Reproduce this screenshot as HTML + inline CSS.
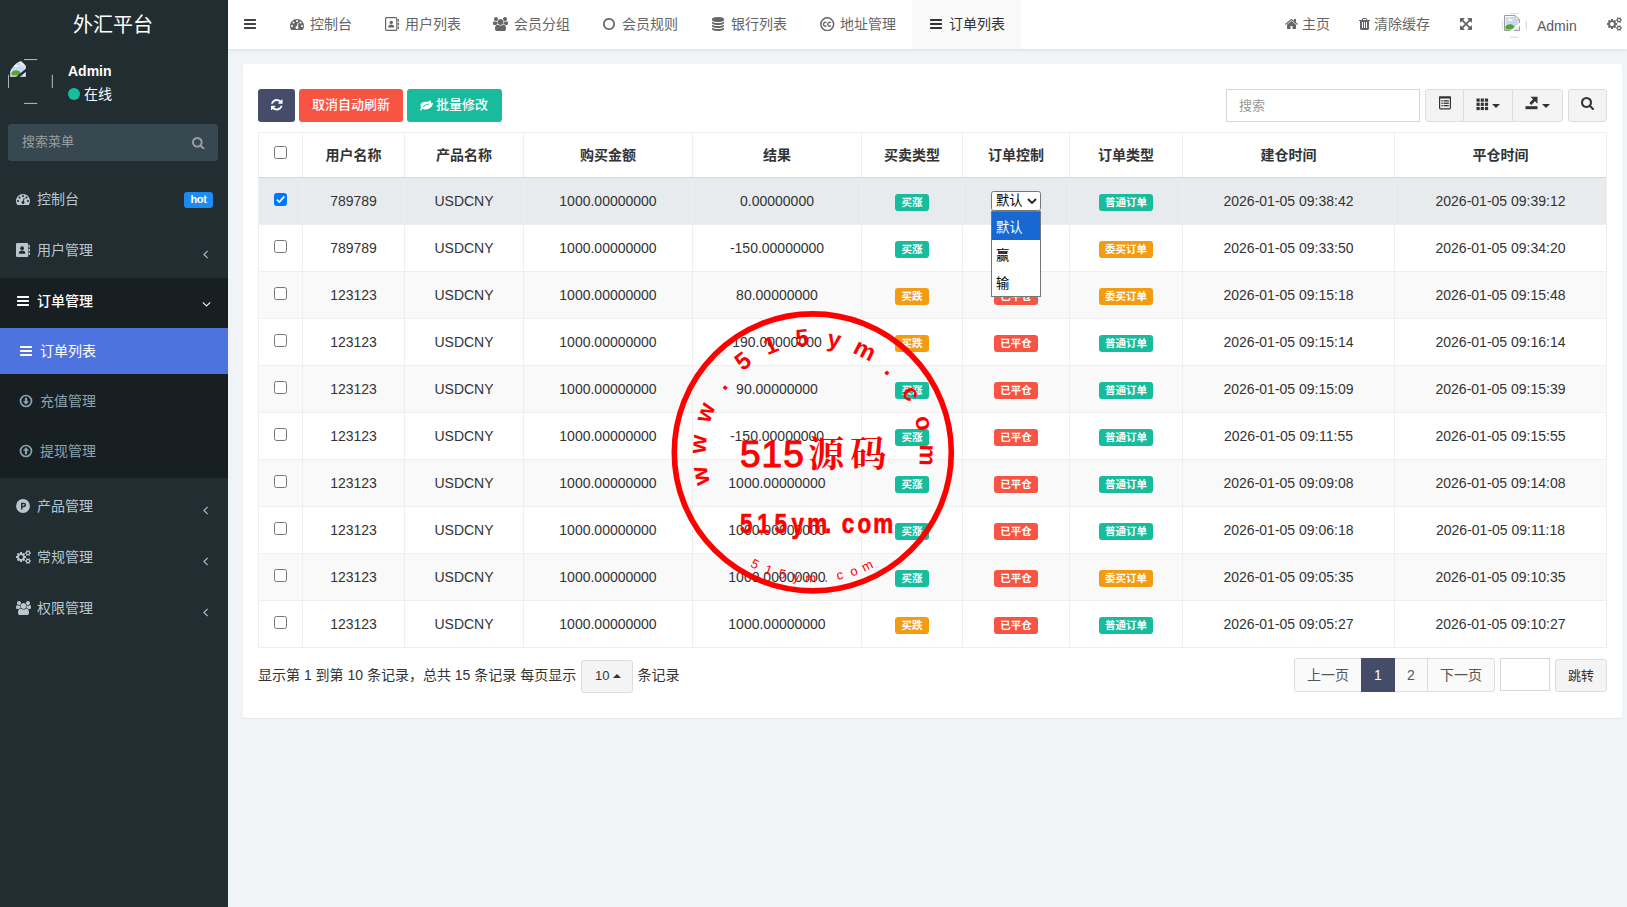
<!DOCTYPE html>
<html lang="zh-CN">
<head>
<meta charset="utf-8">
<title>外汇平台</title>
<style>
*{box-sizing:border-box;margin:0;padding:0}
html,body{width:1627px;height:907px;overflow:hidden}
body{font-family:"Liberation Sans","Noto Sans CJK SC",sans-serif;font-size:14px;color:#333;background:#f1f4f6;position:relative}
svg{display:block}
.abs{position:absolute}
/* sidebar */
#side{position:absolute;left:0;top:0;width:228px;height:907px;background:#222d32;color:#b8c7ce}
#logo{position:absolute;left:0;top:0;width:228px;height:48px;line-height:50px;text-align:center;color:#fff;font-size:20px;padding-right:2px}
#avatar{position:absolute;left:8px;top:59px;width:45px;height:45px}
#uname{position:absolute;left:68px;top:61.5px;color:#fff;font-weight:bold;font-size:14px;line-height:18px}
#ustat{position:absolute;left:68px;top:84.5px;color:#fff;font-size:14px;line-height:18px;white-space:nowrap}
#ustat i{display:inline-block;width:12px;height:12px;border-radius:50%;background:#18bc9c;vertical-align:-1.5px;margin-right:4px}
#msearch{position:absolute;left:8px;top:124px;width:210px;height:37px;background:#374850;border-radius:3px;color:#9a9fa2;font-size:13px;line-height:36.500px;padding-left:14px}
.mi{position:absolute;left:0;width:228px;height:24px;line-height:24px;font-size:14px;color:#b8c7ce;white-space:nowrap}
.mi .ic{position:absolute;left:15px;top:0;height:24px;width:16px;display:flex;align-items:center;justify-content:center}
.mi .tx{position:absolute;left:37px;top:0}
.mi .ar{position:absolute;left:203px;top:9px}
.mi.act{color:#fff;font-weight:500}
.sm{position:absolute;left:0;width:228px;height:24px;line-height:24px;font-size:14px;color:#8aa4af;white-space:nowrap}
.sm .ic{position:absolute;left:19px;top:0;height:24px;width:14px;display:flex;align-items:center;justify-content:center}
.sm .tx{position:absolute;left:40px;top:0}
.sm.on{color:#fff}
.hot{position:absolute;left:184px;top:5px;width:29px;height:16px;border-radius:3px;background:#1b8bf0;color:#fff;font-size:11px;font-weight:bold;line-height:15px;text-align:center;letter-spacing:-.3px}
/* header */
#head{position:absolute;left:228px;top:0;width:1399px;height:49px;background:#fff;box-shadow:0 1px 3px rgba(0,0,0,.1)}
.tab{position:absolute;top:0;height:48px;line-height:48px;font-size:14px;color:#666;white-space:nowrap}
.tab .ti{position:absolute;top:0;height:48px;display:flex;align-items:center}
.tab.cur{color:#333}
/* panel */
#panel{position:absolute;left:243px;top:64px;width:1379px;height:654px;background:#fff;border-radius:3px;box-shadow:0 1px 1px rgba(0,0,0,.05)}
.btn{position:absolute;top:89px;height:33px;border-radius:3px;color:#fff;font-weight:500;font-size:13px;line-height:32px;text-align:center;white-space:nowrap}
.dbtn{position:absolute;background:#f4f4f4;border:1px solid #ddd;color:#333}

#tbl{position:absolute;left:258px;top:132px;width:1349px;border:1px solid #efefef;border-left:0;border-bottom:0;font-size:14px}
.tr{display:flex;height:47px;border-bottom:1px solid #efefef;background:#fff}
.tr.h .td{padding-bottom:2px}
.tr.h{height:45px;border-bottom:1px solid #d3d7da;font-weight:bold;color:#333}
.tr.s{background:#f9f9f9}
.tr.sel{background:#e8ebee}
.td{border-left:1px solid #efefef;height:100%;display:flex;align-items:center;justify-content:center;white-space:nowrap;flex:none;position:relative}
.c0{width:44px}.c1{width:102px}.c2{width:119px}.c3{width:169px}.c4{width:169px}.c5{width:101px}.c6{width:107px}.c7{width:113px}.c8{width:212px}.c9{width:212px}
.cb{position:relative;top:-2px;left:0;width:13px;height:13px;border:1px solid #767676;border-radius:2.5px;background:#fff;display:block}
.cb.on{background:#0075ff;border-color:#0075ff}
.lb{display:inline-block;position:relative;top:1.5px;height:17px;line-height:16px;padding:0 6.2px;border-radius:3px;color:#fff;font-size:10.5px;font-weight:bold;letter-spacing:0}
.g{background:#18bc9c}.o{background:#f39c12}.r{background:#f75444}
.pg{position:absolute;top:658px;height:34px;line-height:32px;border:1px solid #ddd;background:#fafafa;color:#555;font-size:14px;text-align:center;white-space:nowrap}
</style>
</head>
<body>
<div id="side">
<div id="logo">外汇平台</div>
<div id="avatar"><svg viewBox="0 0 45 45" width="45" height="45" style=""><defs><clipPath id="avc"><circle cx="22.400" cy="22.500" r="22.600"/></clipPath></defs><path d="M16.400 .600h12.400M16.400 44.400h12.400M.400 16.200v12.400M44.300 16.200v12.400" fill="none" stroke="#d4dadd" stroke-width="1" stroke-linecap="round" opacity=".85"/><g clip-path="url(#avc)"><g transform="translate(2,2)"><path d="M.5.5h10.500l4.500 4.500v10.500H.5z" fill="#fff" stroke="#b8c0c4" stroke-width="1"/><path d="M11 .5v4.500h4.500z" fill="#fff" stroke="#b8c0c4" stroke-width=".8"/><path d="M1.500 2h9v3.500h4v9h-13z" fill="#c9d9f3"/><path d="M4 5.200a1.600 1.600 0 0 1 3-.6 1.200 1.200 0 0 1 1.600 1.200H3.600z" fill="#fff"/><path d="M1.500 14.500v-3c2-2.500 5.500-3 8-1l3 4z" fill="#55a630"/><path d="M6 16l10-8.500v3.200L9.500 16z" fill="#222d32"/></g></g></svg></div>
<div id="uname">Admin</div>
<div id="ustat"><i></i>在线</div>
<div id="msearch">搜索菜单<svg viewBox="0 0 1664 1792" width="12.54" height="13.50" style="position:absolute;left:184px;top:11.500px"><path d="M1152 832q0-185-131.500-316.500T704 384 387.500 515.500 256 832t131.500 316.500T704 1280t316.500-131.500T1152 832zm512 832q0 52-38 90t-90 38q-54 0-90-38l-343-342q-179 124-399 124-143 0-273.500-55.500t-225-150-150-225T0 832t55.500-273.500 150-225 225-150T704 128t273.500 55.500 225 150 150 225T1408 832q0 220-124 399l343 343q37 37 37 90z" fill="#9a9fa2"/></svg></div>
<div class="abs" style="left:0;top:278px;width:228px;height:200px;background:#181f23"></div>
<div class="abs" style="left:0;top:328px;width:228px;height:46px;background:#4e73df"></div>
<div class="mi" style="top:187px"><span class="ic"><svg viewBox="0 0 1792 1792" width="14.00" height="14.00" style=""><path d="M384 1152q0-53-37.500-90.500T256 1024t-90.500 37.500T128 1152t37.500 90.500T256 1280t90.500-37.500T384 1152zm192-448q0-53-37.500-90.500T448 576t-90.500 37.500T320 704t37.500 90.500T448 832t90.500-37.500T576 704zm428 481l101-382q6-26-7.500-48.500T1059 725t-48 6.500-30 39.500l-101 382q-60 5-107 43.500t-63 98.500q-20 77 20 146t117 89 146-20 89-117q16-60-6-117t-72-91zm660-33q0-53-37.500-90.500T1536 1024t-90.500 37.500-37.500 90.500 37.500 90.500 90.500 37.500 90.500-37.500 37.500-90.500zm-640-640q0-53-37.500-90.500T896 384t-90.500 37.500T768 512t37.500 90.500T896 640t90.500-37.500T1024 512zm448 192q0-53-37.500-90.500T1344 576t-90.500 37.500T1216 704t37.500 90.500T1344 832t90.500-37.500T1472 704zm320 448q0 261-141 483-19 29-54 29H195q-35 0-54-29Q0 1414 0 1152q0-182 71-348t191-286 286-191 348-71 348 71 286 191 191 286 71 348z" fill="currentColor"/></svg></span><span class="tx">控制台</span><span class="hot">hot</span></div>
<div class="mi" style="top:238px"><span class="ic"><svg viewBox="0 0 14 14" width="14" height="14" style=""><rect x="0" y="0" width="12.2" height="14" rx="1.2" fill="currentColor"/><rect x="12.6" y="2" width="1.4" height="2.6" rx=".4" fill="currentColor"/><rect x="12.6" y="5.7" width="1.4" height="2.6" rx=".4" fill="currentColor"/><rect x="12.6" y="9.4" width="1.4" height="2.6" rx=".4" fill="currentColor"/><circle cx="6.1" cy="5.2" r="1.9" fill="#222d32"/><path d="M2.8 10.8c0-2.2 1.3-3.3 3.3-3.3s3.3 1.100 3.300 3.300z" fill="#222d32"/></svg></span><span class="tx">用户管理</span><span class="ar"><svg viewBox="0 0 640 1792" width="5.00" height="14.00" style=""><path d="M627 544q0 13-10 23L224 960l393 393q10 10 10 23t-10 23l-50 50q-10 10-23 10t-23-10L55 983q-10-10-10-23t10-23l466-466q10-10 23-10t23 10l50 50q10 10 10 23z" fill="currentColor"/></svg></span></div>
<div class="mi act" style="top:289px"><span class="ic"><svg viewBox="0 0 1536 1792" width="12.00" height="14.00" style=""><path d="M1536 1344v128q0 26-19 45t-45 19H64q-26 0-45-19t-19-45v-128q0-26 19-45t45-19h1408q26 0 45 19t19 45zm0-512v128q0 26-19 45t-45 19H64q-26 0-45-19T0 960V832q0-26 19-45t45-19h1408q26 0 45 19t19 45zm0-512v128q0 26-19 45t-45 19H64q-26 0-45-19T0 448V320q0-26 19-45t45-19h1408q26 0 45 19t19 45z" fill="currentColor"/></svg></span><span class="tx">订单管理</span><span class="ar" style="left:202px;top:8px"><svg viewBox="0 0 1152 1792" width="9.00" height="14.00" style=""><path d="M1075 736q0 13-10 23l-466 466q-10 10-23 10t-23-10L87 759q-10-10-10-23t10-23l50-50q10-10 23-10t23 10l393 393 393-393q10-10 23-10t23 10l50 50q10 10 10 23z" fill="currentColor"/></svg></span></div>
<div class="sm on" style="top:339px"><span class="ic"><svg viewBox="0 0 1536 1792" width="12.00" height="14.00" style=""><path d="M1536 1344v128q0 26-19 45t-45 19H64q-26 0-45-19t-19-45v-128q0-26 19-45t45-19h1408q26 0 45 19t19 45zm0-512v128q0 26-19 45t-45 19H64q-26 0-45-19T0 960V832q0-26 19-45t45-19h1408q26 0 45 19t19 45zm0-512v128q0 26-19 45t-45 19H64q-26 0-45-19T0 448V320q0-26 19-45t45-19h1408q26 0 45 19t19 45z" fill="currentColor"/></svg></span><span class="tx">订单列表</span></div>
<div class="sm" style="top:389px"><span class="ic"><svg viewBox="0 0 14 14" width="14" height="14" style=""><circle cx="7" cy="7" r="5.500" fill="none" stroke="currentColor" stroke-width="1.700"/><path d="M7 10.700L3.900 7.300H5.900V3.700h2.200v3.600h2z" fill="currentColor"/></svg></span><span class="tx">充值管理</span></div>
<div class="sm" style="top:439px"><span class="ic"><svg viewBox="0 0 14 14" width="14" height="14" style=""><circle cx="7" cy="7" r="5.500" fill="none" stroke="currentColor" stroke-width="1.700"/><path d="M7 3.300L3.900 6.700H5.900V10.300h2.200V6.700h2z" fill="currentColor"/></svg></span><span class="tx">提现管理</span></div>
<div class="mi" style="top:494px"><span class="ic"><svg viewBox="0 0 14 14" width="14" height="14" style=""><circle cx="7" cy="7" r="6.900" fill="currentColor"/><path d="M5 3.800h2.900a2.200 2.200 0 0 1 0 4.400H6.400v2.200H5zM6.400 5.200v1.600h1.500a.8.800 0 0 0 0-1.600z" fill="#222d32"/></svg></span><span class="tx">产品管理</span><span class="ar"><svg viewBox="0 0 640 1792" width="5.00" height="14.00" style=""><path d="M627 544q0 13-10 23L224 960l393 393q10 10 10 23t-10 23l-50 50q-10 10-23 10t-23-10L55 983q-10-10-10-23t10-23l466-466q10-10 23-10t23 10l50 50q10 10 10 23z" fill="currentColor"/></svg></span></div>
<div class="mi" style="top:545px"><span class="ic"><svg viewBox="0 0 1920 1792" width="15.00" height="14.00" style=""><path d="M896 896q0-106-75-181t-181-75-181 75-75 181 75 181 181 75 181-75 75-181zm768 512q0-52-38-90t-90-38-90 38-38 90q0 53 37.500 90.500t90.500 37.500 90.500-37.500 37.500-90.500zm0-1024q0-52-38-90t-90-38-90 38-38 90q0 53 37.500 90.500T1536 512t90.500-37.500T1664 384zm-384 421v185q0 10-7 19.500t-16 10.500l-155 24q-11 35-32 76 34 48 90 115 7 11 7 20 0 12-7 19-23 30-82.500 89.500T999 1424q-11 0-21-7l-115-90q-37 19-77 31-11 108-23 155-7 24-30 24H547q-11 0-20-7.500t-10-17.500l-23-153q-34-10-75-31l-118 89q-7 7-20 7-11 0-21-8-144-133-144-160 0-9 7-19 10-14 41-53t47-61q-23-44-35-82l-152-24q-10-1-17-9.500T0 988V803q0-10 7-19.500T23 773l155-24q11-35 32-76-34-48-90-115-7-11-7-20 0-12 7-20 22-30 82-89t79-59q11 0 21 7l115 90q34-18 77-32 11-108 23-154 7-24 30-24h186q11 0 20 7.500t10 17.500l23 153q34 10 75 31l118-89q8-7 20-7 11 0 21 8 144 133 144 160 0 8-7 19-12 16-42 54t-45 60q23 48 34 82l152 23q10 2 17 10.500t7 19.500zm640 533v140q0 16-149 31-12 27-30 52 51 113 51 138 0 4-4 7-122 71-124 71-8 0-46-47t-52-68q-20 2-30 2t-30-2q-14 21-52 68t-46 47q-2 0-124-71-4-3-4-7 0-25 51-138-18-25-30-52-149-15-149-31v-140q0-16 149-31 13-29 30-52-51-113-51-138 0-4 4-7 4-2 35-20t59-34 30-16q8 0 46 46.500t52 67.500q20-2 30-2t30 2q51-71 92-112l6-2q4 0 124 70 4 3 4 7 0 25-51 138 17 23 30 52 149 15 149 31zm0-1024v140q0 16-149 31-12 27-30 52 51 113 51 138 0 4-4 7-122 71-124 71-8 0-46-47t-52-68q-20 2-30 2t-30-2q-14 21-52 68t-46 47q-2 0-124-71-4-3-4-7 0-25 51-138-18-25-30-52-149-15-149-31V314q0-16 149-31 13-29 30-52-51-113-51-138 0-4 4-7 4-2 35-20t59-34 30-16q8 0 46 46.500t52 67.500q20-2 30-2t30 2q51-71 92-112l6-2q4 0 124 70 4 3 4 7 0 25-51 138 17 23 30 52 149 15 149 31z" fill="currentColor"/></svg></span><span class="tx">常规管理</span><span class="ar"><svg viewBox="0 0 640 1792" width="5.00" height="14.00" style=""><path d="M627 544q0 13-10 23L224 960l393 393q10 10 10 23t-10 23l-50 50q-10 10-23 10t-23-10L55 983q-10-10-10-23t10-23l466-466q10-10 23-10t23 10l50 50q10 10 10 23z" fill="currentColor"/></svg></span></div>
<div class="mi" style="top:596px"><span class="ic"><svg viewBox="0 0 1920 1792" width="15.00" height="14.00" style=""><path d="M593 896q-162 5-265 128H194q-82 0-138-40.500T0 865q0-353 124-353 6 0 43.500 21t97.500 42.500T384 597q67 0 133-23-5 37-5 66 0 139 81 256zm1071 637q0 120-73 189.500t-194 69.500H523q-121 0-194-69.500T256 1533q0-53 3.500-103.500t14-109T300 1212t43-97.500 62-81 85.500-53.500T602 960q10 0 43 21.500t73 48 107 48 135 21.500 135-21.500 107-48 73-48 43-21.500q61 0 111.500 20t85.500 53.500 62 81 43 97.500 26.500 108.500 14 109 3.500 103.500zM640 256q0 106-75 181t-181 75-181-75-75-181 75-181T384 0t181 75 75 181zm704 384q0 159-112.500 271.500T960 1024 688.500 911.500 576 640t112.500-271.500T960 256t271.500 112.500T1344 640zm576 225q0 78-56 118.500t-138 40.500h-134q-103-123-265-128 81-117 81-256 0-29-5-66 66 23 133 23 59 0 119-21.500t97.500-42.500 43.500-21q124 0 124 353zm-128-609q0 106-75 181t-181 75-181-75-75-181 75-181 181-75 181 75 75 181z" fill="currentColor"/></svg></span><span class="tx">权限管理</span><span class="ar"><svg viewBox="0 0 640 1792" width="5.00" height="14.00" style=""><path d="M627 544q0 13-10 23L224 960l393 393q10 10 10 23t-10 23l-50 50q-10 10-23 10t-23-10L55 983q-10-10-10-23t10-23l466-466q10-10 23-10t23 10l50 50q10 10 10 23z" fill="currentColor"/></svg></span></div>
</div>
<div id="head">
<div class="tab" style="left:16px;color:#444"><span class="ti" style="left:0"><svg viewBox="0 0 1536 1792" width="12.00" height="14.00" style=""><path d="M1536 1344v128q0 26-19 45t-45 19H64q-26 0-45-19t-19-45v-128q0-26 19-45t45-19h1408q26 0 45 19t19 45zm0-512v128q0 26-19 45t-45 19H64q-26 0-45-19T0 960V832q0-26 19-45t45-19h1408q26 0 45 19t19 45zm0-512v128q0 26-19 45t-45 19H64q-26 0-45-19T0 448V320q0-26 19-45t45-19h1408q26 0 45 19t19 45z" fill="currentColor"/></svg></span></div>
<div class="abs" style="left:684px;top:0;width:109px;height:49px;background:#f9f9f9"></div>
<div class="tab" style="left:62px"><span class="ti" style="left:0"><svg viewBox="0 0 1792 1792" width="14.00" height="14.00" style=""><path d="M384 1152q0-53-37.500-90.500T256 1024t-90.500 37.500T128 1152t37.500 90.500T256 1280t90.500-37.500T384 1152zm192-448q0-53-37.500-90.500T448 576t-90.500 37.500T320 704t37.500 90.500T448 832t90.500-37.500T576 704zm428 481l101-382q6-26-7.500-48.500T1059 725t-48 6.500-30 39.500l-101 382q-60 5-107 43.500t-63 98.500q-20 77 20 146t117 89 146-20 89-117q16-60-6-117t-72-91zm660-33q0-53-37.500-90.500T1536 1024t-90.500 37.500-37.500 90.500 37.500 90.500 90.500 37.500 90.500-37.500 37.500-90.500zm-640-640q0-53-37.500-90.500T896 384t-90.500 37.500T768 512t37.500 90.500T896 640t90.500-37.500T1024 512zm448 192q0-53-37.500-90.500T1344 576t-90.500 37.500T1216 704t37.500 90.500T1344 832t90.500-37.500T1472 704zm320 448q0 261-141 483-19 29-54 29H195q-35 0-54-29Q0 1414 0 1152q0-182 71-348t191-286 286-191 348-71 348 71 286 191 191 286 71 348z" fill="currentColor"/></svg></span><span class="abs" style="left:20px;top:0">控制台</span></div>
<div class="tab" style="left:157px"><span class="ti" style="left:0"><svg viewBox="0 0 14 14" width="14" height="14" style=""><rect x=".6" y=".6" width="11.2" height="12.8" rx="1" fill="none" stroke="currentColor" stroke-width="1.2"/><rect x="12.6" y="2" width="1.4" height="2.6" rx=".4" fill="currentColor"/><rect x="12.6" y="5.700" width="1.4" height="2.6" rx=".4" fill="currentColor"/><rect x="12.6" y="9.4" width="1.4" height="2.6" rx=".4" fill="currentColor"/><circle cx="6.2" cy="5.4" r="1.7" fill="currentColor"/><path d="M3.2 10.4c0-2 1.2-2.900 3-2.900s3 .9 3 2.900z" fill="currentColor"/></svg></span><span class="abs" style="left:20px;top:0">用户列表</span></div>
<div class="tab" style="left:265px"><span class="ti" style="left:0"><svg viewBox="0 0 1920 1792" width="15.00" height="14.00" style=""><path d="M593 896q-162 5-265 128H194q-82 0-138-40.500T0 865q0-353 124-353 6 0 43.500 21t97.500 42.500T384 597q67 0 133-23-5 37-5 66 0 139 81 256zm1071 637q0 120-73 189.500t-194 69.500H523q-121 0-194-69.500T256 1533q0-53 3.500-103.500t14-109T300 1212t43-97.500 62-81 85.500-53.500T602 960q10 0 43 21.500t73 48 107 48 135 21.500 135-21.500 107-48 73-48 43-21.500q61 0 111.500 20t85.500 53.500 62 81 43 97.500 26.500 108.500 14 109 3.500 103.500zM640 256q0 106-75 181t-181 75-181-75-75-181 75-181T384 0t181 75 75 181zm704 384q0 159-112.500 271.500T960 1024 688.500 911.500 576 640t112.500-271.500T960 256t271.500 112.500T1344 640zm576 225q0 78-56 118.500t-138 40.500h-134q-103-123-265-128 81-117 81-256 0-29-5-66 66 23 133 23 59 0 119-21.500t97.500-42.500 43.500-21q124 0 124 353zm-128-609q0 106-75 181t-181 75-181-75-75-181 75-181 181-75 181 75 75 181z" fill="currentColor"/></svg></span><span class="abs" style="left:21px;top:0">会员分组</span></div>
<div class="tab" style="left:375px"><span class="ti" style="left:0"><svg viewBox="0 0 1536 1792" width="12.00" height="14.00" style=""><path d="M768 352q-148 0-273 73T297 623t-73 273 73 273 198 198 273 73 273-73 198-198 73-273-73-273-198-198-273-73zm768 544q0 209-103 385.500T1153.500 1561 768 1664t-385.500-103T103 1281.500 0 896t103-385.500T382.500 231 768 128t385.500 103T1433 510.500 1536 896z" fill="currentColor"/></svg></span><span class="abs" style="left:19px;top:0">会员规则</span></div>
<div class="tab" style="left:484px"><span class="ti" style="left:0"><svg viewBox="0 0 1536 1792" width="12.00" height="14.00" style=""><path d="M768 768q237 0 443-43t325-127v170q0 69-103 128t-280 93.500-385 34.500-385-34.500T103 896 0 768V598q119 84 325 127t443 43zm0 768q237 0 443-43t325-127v170q0 69-103 128t-280 93.500-385 34.500-385-34.500-280-93.500T0 1536v-170q119 84 325 127t443 43zm0-384q237 0 443-43t325-127v170q0 69-103 128t-280 93.500-385 34.500-385-34.500-280-93.500T0 1152V982q119 84 325 127t443 43zM768 0q208 0 385 34.500t280 93.500 103 128v128q0 69-103 128t-280 93.500T768 640t-385-34.500T103 512 0 384V256q0-69 103-128t280-93.500T768 0z" fill="currentColor"/></svg></span><span class="abs" style="left:19px;top:0">银行列表</span></div>
<div class="tab" style="left:592px"><span class="ti" style="left:0"><svg viewBox="0 0 14.500 14.500" width="14.5" height="14.5" style=""><circle cx="7.250" cy="7.250" r="6.400" fill="none" stroke="currentColor" stroke-width="1.500"/><path d="M6.500 5.800a1.900 1.900 0 1 0 0 2.900" fill="none" stroke="currentColor" stroke-width="1.300"/><path d="M10.900 5.800a1.900 1.900 0 1 0 0 2.900" fill="none" stroke="currentColor" stroke-width="1.300"/></svg></span><span class="abs" style="left:20px;top:0">地址管理</span></div>
<div class="tab cur" style="left:702px"><span class="ti" style="left:0"><svg viewBox="0 0 1536 1792" width="12.00" height="14.00" style=""><path d="M1536 1344v128q0 26-19 45t-45 19H64q-26 0-45-19t-19-45v-128q0-26 19-45t45-19h1408q26 0 45 19t19 45zm0-512v128q0 26-19 45t-45 19H64q-26 0-45-19T0 960V832q0-26 19-45t45-19h1408q26 0 45 19t19 45zm0-512v128q0 26-19 45t-45 19H64q-26 0-45-19T0 448V320q0-26 19-45t45-19h1408q26 0 45 19t19 45z" fill="currentColor"/></svg></span><span class="abs" style="left:19px;top:0">订单列表</span></div>
<div class="tab" style="left:1057px"><span class="ti" style="left:0"><svg viewBox="0 0 1664 1792" width="13.00" height="14.00" style=""><path d="M1408 992v480q0 26-19 45t-45 19H960v-384H704v384H320q-26 0-45-19t-19-45V992q0-1 .5-3t.5-3l575-474 575 474q1 2 1 6zm223-69l-62 74q-8 9-21 11h-3q-13 0-21-7L832 424 140 1001q-12 8-24 7-13-2-21-11l-62-74q-8-10-7-23.500T37 878l719-599q32-26 76-26t76 26l244 204V288q0-14 9-23t23-9h192q14 0 23 9t9 23v408l219 182q10 8 11 21.500t-7 23.500z" fill="currentColor"/></svg></span><span class="abs" style="left:17px;top:0">主页</span></div>
<div class="tab" style="left:1131px"><span class="ti" style="left:0"><svg viewBox="0 0 1408 1792" width="11.00" height="14.00" style=""><path d="M512 1376V672q0-14-9-23t-23-9h-64q-14 0-23 9t-9 23v704q0 14 9 23t23 9h64q14 0 23-9t9-23zm256 0V672q0-14-9-23t-23-9h-64q-14 0-23 9t-9 23v704q0 14 9 23t23 9h64q14 0 23-9t9-23zm256 0V672q0-14-9-23t-23-9h-64q-14 0-23 9t-9 23v704q0 14 9 23t23 9h64q14 0 23-9t9-23zM480 384h448l-48-117q-7-9-17-11H546q-10 2-17 11zm928 32v64q0 14-9 23t-23 9h-96v948q0 83-47 143.500t-113 60.500H288q-66 0-113-58.500T128 1464V512H32q-14 0-23-9t-9-23v-64q0-14 9-23t23-9h309l70-167q15-37 54-63t79-26h320q40 0 79 26t54 63l70 167h309q14 0 23 9t9 23z" fill="currentColor"/></svg></span><span class="abs" style="left:15px;top:0">清除缓存</span></div>
<div class="tab" style="left:1232px"><span class="ti" style="left:0"><svg viewBox="0 -128 1536 1792" width="12.00" height="14.00" style=""><path d="M1283 413L928 768l355 355 144-144q29-31 70-14 39 17 39 59v448q0 26-19 45t-45 19h-448q-42 0-59-40-17-39 14-69l144-144-355-355-355 355 144 144q31 30 14 69-17 40-59 40H64q-26 0-45-19t-19-45v-448q0-42 40-59 39-17 69 14l144 144 355-355-355-355-144 144q-19 19-45 19-12 0-24-5-40-17-40-59V64q0-26 19-45T64 0h448q42 0 59 40 17 39-14 69L413 253l355 355 355-355-144-144q-31-30-14-69 17-40 59-40h448q26 0 45 19t19 45v448q0 42-39 59-13 5-25 5-26 0-45-19z" fill="currentColor"/></svg></span><span class="abs" style="left:0px;top:0"></span></div>
<div class="abs" style="left:1274px;top:13px;width:25px;height:25px"><svg viewBox="0 0 25 25" width="25" height="25" style=""><path d="M8.300 .300h8M8.300 24.300h8M.300 8.300v8M24.300 8.300v8" fill="none" stroke="#cfcfcf" stroke-width="1" stroke-linecap="round" opacity=".8"/><g transform="translate(2,2)"><path d="M.5.5h10.500l4.500 4.500v10.500H.5z" fill="#fff" stroke="#9a9a9a" stroke-width="1"/><path d="M11 .5v4.500h4.500z" fill="#fff" stroke="#9a9a9a" stroke-width=".8"/><path d="M1.500 2h9v3.500h4v9h-13z" fill="#c9d9f3"/><path d="M4 5.200a1.600 1.600 0 0 1 3-.6 1.200 1.200 0 0 1 1.600 1.200H3.600z" fill="#fff"/><path d="M1.500 14.500v-3c2-2.500 5.500-3 8-1l3 4z" fill="#55a630"/><path d="M6 16l10-8.500v3.200L9.500 16z" fill="#fff"/></g></svg></div>
<div class="tab" style="left:1309px;top:1.500px;color:#585858">Admin</div>
<div class="tab" style="left:1379px"><span class="ti" style="left:0"><svg viewBox="0 0 1920 1792" width="15.00" height="14.00" style=""><path d="M896 896q0-106-75-181t-181-75-181 75-75 181 75 181 181 75 181-75 75-181zm768 512q0-52-38-90t-90-38-90 38-38 90q0 53 37.500 90.500t90.500 37.500 90.500-37.500 37.500-90.500zm0-1024q0-52-38-90t-90-38-90 38-38 90q0 53 37.500 90.500T1536 512t90.500-37.500T1664 384zm-384 421v185q0 10-7 19.500t-16 10.500l-155 24q-11 35-32 76 34 48 90 115 7 11 7 20 0 12-7 19-23 30-82.500 89.500T999 1424q-11 0-21-7l-115-90q-37 19-77 31-11 108-23 155-7 24-30 24H547q-11 0-20-7.500t-10-17.500l-23-153q-34-10-75-31l-118 89q-7 7-20 7-11 0-21-8-144-133-144-160 0-9 7-19 10-14 41-53t47-61q-23-44-35-82l-152-24q-10-1-17-9.500T0 988V803q0-10 7-19.500T23 773l155-24q11-35 32-76-34-48-90-115-7-11-7-20 0-12 7-20 22-30 82-89t79-59q11 0 21 7l115 90q34-18 77-32 11-108 23-154 7-24 30-24h186q11 0 20 7.500t10 17.500l23 153q34 10 75 31l118-89q8-7 20-7 11 0 21 8 144 133 144 160 0 8-7 19-12 16-42 54t-45 60q23 48 34 82l152 23q10 2 17 10.500t7 19.500zm640 533v140q0 16-149 31-12 27-30 52 51 113 51 138 0 4-4 7-122 71-124 71-8 0-46-47t-52-68q-20 2-30 2t-30-2q-14 21-52 68t-46 47q-2 0-124-71-4-3-4-7 0-25 51-138-18-25-30-52-149-15-149-31v-140q0-16 149-31 13-29 30-52-51-113-51-138 0-4 4-7 4-2 35-20t59-34 30-16q8 0 46 46.500t52 67.500q20-2 30-2t30 2q51-71 92-112l6-2q4 0 124 70 4 3 4 7 0 25-51 138 17 23 30 52 149 15 149 31zm0-1024v140q0 16-149 31-12 27-30 52 51 113 51 138 0 4-4 7-122 71-124 71-8 0-46-47t-52-68q-20 2-30 2t-30-2q-14 21-52 68t-46 47q-2 0-124-71-4-3-4-7 0-25 51-138-18-25-30-52-149-15-149-31V314q0-16 149-31 13-29 30-52-51-113-51-138 0-4 4-7 4-2 35-20t59-34 30-16q8 0 46 46.500t52 67.500q20-2 30-2t30 2q51-71 92-112l6-2q4 0 124 70 4 3 4 7 0 25-51 138 17 23 30 52 149 15 149 31z" fill="currentColor"/></svg></span><span class="abs" style="left:0px;top:0"></span></div>
</div>
<div id="panel"></div>
<div class="btn" style="left:258px;width:37px;background:#444c69"><span style="position:absolute;left:13px;top:9px"><svg viewBox="0 0 1536 1792" width="11.57" height="13.50" style=""><path d="M1511 1056q0 5-1 7-64 268-268 434.500T764 1664q-146 0-282.500-55T238 1452l-129 129q-19 19-45 19t-45-19-19-45v-448q0-26 19-45t45-19h448q26 0 45 19t19 45-19 45l-137 137q71 66 161 102t187 36q134 0 250-65t186-179q11-17 53-117 8-23 30-23h192q13 0 22.500 9.500t9.500 22.500zm25-800v448q0 26-19 45t-45 19h-448q-26 0-45-19t-19-45 19-45l138-138Q969 384 768 384q-134 0-250 65T332 628q-11 17-53 117-8 23-30 23H50q-13 0-22.500-9.500T18 736v-7q65-268 270-434.500T768 128q146 0 284 55.500T1297 340l130-129q19-19 45-19t45 19 19 45z" fill="#fff"/></svg></span></div>
<div class="btn" style="left:299px;width:104px;background:#f75444">取消自动刷新</div>
<div class="btn" style="left:407px;width:95px;background:#18bc9c"><span style="position:absolute;left:13px;top:10px"><svg viewBox="0 0 1792 1792" width="13.00" height="13.00" style=""><path d="M1280 704q0-26-19-45t-45-19q-172 0-318 49.500T638.500 823 433 1024q-19 21-19 45 0 26 19 45t45 19q24 0 45-19 27-24 74-71t67-66q137-124 268.500-176t313.500-52q26 0 45-19t19-45zm512-198q0 95-20 193-46 224-184.500 383T1230 1350q-203 101-415 101-140 0-271-40-14-4-83-35.500T371 1344q-35 0-67 39t-57 83.500-53 87.500-55 43q-38 0-56-14.500T58 1547.500 43 1494t-6-35q0-46 39-123.500t102-127.500q-58-30-84-109T68 948q0-137 59-248t163-182 230-107 266-36q31 0 100 1.500t100 1.500q47 0 93-10t79-23.500 64-33.500 51-35 36.500-34 25.500-25 13-13q20-19 47-19 32 0 56.500 29.500t43.500 79 29.500 107.500 16 111.500 5.500 94.500z" fill="#fff"/></svg></span><span style="position:absolute;left:29px;top:0">批量修改</span></div>
<div class="abs" style="left:1226px;top:89px;width:194px;height:33px;border:1px solid #d2d6de;background:#fff;color:#999;font-size:13px;line-height:31px;padding-left:12px">搜索</div>
<div class="dbtn" style="left:1425px;top:89px;width:39px;height:33px;border-radius:3px 0 0 3px"><svg viewBox="0 0 14 14" width="14" height="14" style="position:absolute;left:12px;top:5.500px"><rect x="1.600" y="1.100" width="10.800" height="11.800" rx=".8" fill="none" stroke="#333" stroke-width="1.200"/><rect x="1" y=".5" width="12" height="2" fill="#333"/><rect x="3.400" y="4.2" width="1.400" height="1.300" fill="#333"/><rect x="5.600" y="4.2" width="5.200" height="1.300" fill="#333"/><rect x="3.400" y="6.6" width="1.400" height="1.300" fill="#333"/><rect x="5.600" y="6.6" width="5.200" height="1.300" fill="#333"/><rect x="3.400" y="9.0" width="1.400" height="1.300" fill="#333"/><rect x="5.600" y="9.0" width="5.200" height="1.300" fill="#333"/></svg></div>
<div class="dbtn" style="left:1463px;top:89px;width:50px;height:33px"><svg viewBox="0 0 13 13" width="13" height="13" style="position:absolute;left:12px;top:7.500px"><rect x="0.5" y="0.5" width="3.200" height="3.200" fill="#333"/><rect x="0.5" y="4.7" width="3.200" height="3.200" fill="#333"/><rect x="0.5" y="8.9" width="3.200" height="3.200" fill="#333"/><rect x="4.7" y="0.5" width="3.200" height="3.200" fill="#333"/><rect x="4.7" y="4.7" width="3.200" height="3.200" fill="#333"/><rect x="4.7" y="8.9" width="3.200" height="3.200" fill="#333"/><rect x="8.9" y="0.5" width="3.200" height="3.200" fill="#333"/><rect x="8.9" y="4.7" width="3.200" height="3.200" fill="#333"/><rect x="8.9" y="8.9" width="3.200" height="3.200" fill="#333"/></svg><span class="abs" style="left:28px;top:14px;border:4px solid transparent;border-top-color:#333;border-bottom:0"></span></div>
<div class="dbtn" style="left:1512px;top:89px;width:51px;height:33px;border-radius:0 3px 3px 0"><svg viewBox="0 0 14 14" width="14" height="14" style="position:absolute;left:12px;top:6px"><path d="M.500 10.200h12v3H.500z" fill="#333"/><path d="M5.500 .800h7v7l-2.500-2.500L6.300 9 4.300 7 8 3.300z" fill="#333"/></svg><span class="abs" style="left:29px;top:14px;border:4px solid transparent;border-top-color:#333;border-bottom:0"></span></div>
<div class="dbtn" style="left:1568px;top:89px;width:39px;height:33px;border-radius:3px"><span style="position:absolute;left:12px;top:6px"><svg viewBox="0 0 1664 1792" width="13.00" height="14.00" style=""><path d="M1152 832q0-185-131.500-316.500T704 384 387.500 515.500 256 832t131.500 316.500T704 1280t316.500-131.500T1152 832zm512 832q0 52-38 90t-90 38q-54 0-90-38l-343-342q-179 124-399 124-143 0-273.500-55.500t-225-150-150-225T0 832t55.500-273.500 150-225 225-150T704 128t273.500 55.500 225 150 150 225T1408 832q0 220-124 399l343 343q37 37 37 90z" fill="#333"/></svg></span></div>

<div id="tbl">
<div class="tr h"><div class="td c0"><i class="cb"></i></div><div class="td c1">用户名称</div><div class="td c2">产品名称</div><div class="td c3">购买金额</div><div class="td c4">结果</div><div class="td c5">买卖类型</div><div class="td c6">订单控制</div><div class="td c7">订单类型</div><div class="td c8">建仓时间</div><div class="td c9">平仓时间</div></div>
<div class="tr sel"><div class="td c0"><i class="cb on"><svg viewBox="0 0 13 13" width="11" height="11" style="margin:0"><path d="M2.200 6.600l3 3 5.800-6.800" fill="none" stroke="#fff" stroke-width="2"/></svg></i></div><div class="td c1">789789</div><div class="td c2">USDCNY</div><div class="td c3">1000.00000000</div><div class="td c4">0.00000000</div><div class="td c5"><span class="lb g">买涨</span></div><div class="td c6"></div><div class="td c7"><span class="lb g">普通订单</span></div><div class="td c8">2026-01-05 09:38:42</div><div class="td c9">2026-01-05 09:39:12</div></div>
<div class="tr"><div class="td c0"><i class="cb"></i></div><div class="td c1">789789</div><div class="td c2">USDCNY</div><div class="td c3">1000.00000000</div><div class="td c4">-150.00000000</div><div class="td c5"><span class="lb g">买涨</span></div><div class="td c6"><span class="lb r">已平仓</span></div><div class="td c7"><span class="lb o">委买订单</span></div><div class="td c8">2026-01-05 09:33:50</div><div class="td c9">2026-01-05 09:34:20</div></div>
<div class="tr s"><div class="td c0"><i class="cb"></i></div><div class="td c1">123123</div><div class="td c2">USDCNY</div><div class="td c3">1000.00000000</div><div class="td c4">80.00000000</div><div class="td c5"><span class="lb o">买跌</span></div><div class="td c6"><span class="lb r">已平仓</span></div><div class="td c7"><span class="lb o">委买订单</span></div><div class="td c8">2026-01-05 09:15:18</div><div class="td c9">2026-01-05 09:15:48</div></div>
<div class="tr"><div class="td c0"><i class="cb"></i></div><div class="td c1">123123</div><div class="td c2">USDCNY</div><div class="td c3">1000.00000000</div><div class="td c4">190.00000000</div><div class="td c5"><span class="lb o">买跌</span></div><div class="td c6"><span class="lb r">已平仓</span></div><div class="td c7"><span class="lb g">普通订单</span></div><div class="td c8">2026-01-05 09:15:14</div><div class="td c9">2026-01-05 09:16:14</div></div>
<div class="tr s"><div class="td c0"><i class="cb"></i></div><div class="td c1">123123</div><div class="td c2">USDCNY</div><div class="td c3">1000.00000000</div><div class="td c4">90.00000000</div><div class="td c5"><span class="lb g">买涨</span></div><div class="td c6"><span class="lb r">已平仓</span></div><div class="td c7"><span class="lb g">普通订单</span></div><div class="td c8">2026-01-05 09:15:09</div><div class="td c9">2026-01-05 09:15:39</div></div>
<div class="tr"><div class="td c0"><i class="cb"></i></div><div class="td c1">123123</div><div class="td c2">USDCNY</div><div class="td c3">1000.00000000</div><div class="td c4">-150.00000000</div><div class="td c5"><span class="lb g">买涨</span></div><div class="td c6"><span class="lb r">已平仓</span></div><div class="td c7"><span class="lb g">普通订单</span></div><div class="td c8">2026-01-05 09:11:55</div><div class="td c9">2026-01-05 09:15:55</div></div>
<div class="tr s"><div class="td c0"><i class="cb"></i></div><div class="td c1">123123</div><div class="td c2">USDCNY</div><div class="td c3">1000.00000000</div><div class="td c4">1000.00000000</div><div class="td c5"><span class="lb g">买涨</span></div><div class="td c6"><span class="lb r">已平仓</span></div><div class="td c7"><span class="lb g">普通订单</span></div><div class="td c8">2026-01-05 09:09:08</div><div class="td c9">2026-01-05 09:14:08</div></div>
<div class="tr"><div class="td c0"><i class="cb"></i></div><div class="td c1">123123</div><div class="td c2">USDCNY</div><div class="td c3">1000.00000000</div><div class="td c4">1000.00000000</div><div class="td c5"><span class="lb g">买涨</span></div><div class="td c6"><span class="lb r">已平仓</span></div><div class="td c7"><span class="lb g">普通订单</span></div><div class="td c8">2026-01-05 09:06:18</div><div class="td c9">2026-01-05 09:11:18</div></div>
<div class="tr s"><div class="td c0"><i class="cb"></i></div><div class="td c1">123123</div><div class="td c2">USDCNY</div><div class="td c3">1000.00000000</div><div class="td c4">1000.00000000</div><div class="td c5"><span class="lb g">买涨</span></div><div class="td c6"><span class="lb r">已平仓</span></div><div class="td c7"><span class="lb o">委买订单</span></div><div class="td c8">2026-01-05 09:05:35</div><div class="td c9">2026-01-05 09:10:35</div></div>
<div class="tr"><div class="td c0"><i class="cb"></i></div><div class="td c1">123123</div><div class="td c2">USDCNY</div><div class="td c3">1000.00000000</div><div class="td c4">1000.00000000</div><div class="td c5"><span class="lb o">买跌</span></div><div class="td c6"><span class="lb r">已平仓</span></div><div class="td c7"><span class="lb g">普通订单</span></div><div class="td c8">2026-01-05 09:05:27</div><div class="td c9">2026-01-05 09:10:27</div></div>
</div>
<div class="abs" style="left:991px;top:191px;width:50px;height:20px;border:1px solid #767676;border-radius:2.500px;background:#fff;font-size:13.300px;line-height:18px;padding-left:4px;color:#000">默认<svg viewBox="0 0 10 6" width="10" height="6" style="position:absolute;left:35px;top:6px"><path d="M1 1l4 4 4-4" fill="none" stroke="#222" stroke-width="1.800"/></svg></div>
<div class="abs" style="left:991px;top:211px;width:50px;height:86px;border:1px solid #767676;background:#fff;font-size:13.300px;color:#000"><div style="height:28px;line-height:31px;padding-left:4px;background:#1967d2;color:#fff">默认</div><div style="height:28px;line-height:31px;padding-left:4px">赢</div><div style="height:28px;line-height:31px;padding-left:4px">输</div></div>

<div class="abs" style="left:258px;top:660px;height:32px;line-height:31px;font-size:14px;color:#333;white-space:nowrap">显示第 1 到第 10 条记录，总共 15 条记录 每页显示</div>
<div class="dbtn" style="left:581px;top:660px;width:52px;height:33px;border-radius:3px;font-size:13px;line-height:30px;padding-left:13px">10<span class="abs" style="left:31px;top:13px;border:4px solid transparent;border-bottom-color:#333;border-top:0"></span></div>
<div class="abs" style="left:637.500px;top:660px;height:32px;line-height:31px;font-size:14px;color:#333">条记录</div>
<div class="pg" style="left:1294px;width:68px;border-radius:3px 0 0 3px">上一页</div><div class="pg" style="left:1361px;width:34px;background:#444c69;border-color:#444c69;color:#fff">1</div><div class="pg" style="left:1395px;width:33px;border-left:0">2</div><div class="pg" style="left:1427px;width:68px;border-radius:0 3px 3px 0">下一页</div>
<div class="abs" style="left:1500px;top:658px;width:50px;height:33px;border:1px solid #d2d6de;background:#fff"></div>
<div class="dbtn" style="left:1555px;top:659px;width:52px;height:33px;border-radius:3px;font-size:13px;line-height:31px;text-align:center">跳转</div>

<svg class="abs" style="left:660px;top:300px;pointer-events:none" width="310" height="310" viewBox="660 300 310 310" fill="#f00" font-family="Liberation Sans, sans-serif">
<circle cx="812.8" cy="452.4" r="138.500" fill="none" stroke="#f00" stroke-width="5.600"/>
<text x="710.0 705.4 709.2 724.7 742.4 767.5 796.3 826.3 851.7 883.3 901.2 914.4 920.0" y="483.6 453.9 424.0 391.6 371.6 355.2 346.5 346.0 352.2 371.9 391.7 418.0 444.2" rotate="258.1 274.2 290.3 306.4 322.5 338.6 354.7 370.8 386.9 403.0 419.1 435.2 451.3" font-size="24" font-weight="bold" >www.515ym.com</text>
<text x="749.8 763.4 777.7 792.4 805.3 824.4 837.5 851.8 864.3" y="566.2 572.7 577.6 580.8 582.3 581.9 580.1 576.5 571.9" rotate="27.4 20.7 14.1 7.4 0.8 -5.9 -12.6 -19.2 -25.9" font-size="13" font-weight="normal" >515ym.com</text>
<text x="740" y="466.600" font-size="37" letter-spacing="1" font-family="Liberation Sans, Noto Serif CJK SC, serif" font-weight="normal" stroke="#f00" stroke-width="1.1">515<tspan stroke="none" font-size="36" dx="3.500" letter-spacing="6" font-weight="bold" font-family="Liberation Serif, Noto Serif CJK SC, serif">源码</tspan></text>
<text transform="translate(740,533) scale(0.8,1)" font-size="28" font-weight="bold" stroke="#f00" stroke-width=".700" x="0.0 21.5 43.0 64.5 84.2 106.2 127.2 147.0 166.6">515ym.com</text>
</svg>

</body>
</html>
